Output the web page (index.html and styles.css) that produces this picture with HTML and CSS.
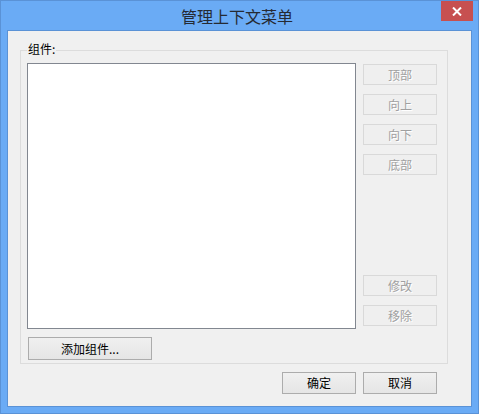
FILE: index.html
```html
<!DOCTYPE html>
<html lang="zh">
<head>
<meta charset="utf-8">
<title>管理上下文菜单</title>
<link rel="stylesheet" href="styles.css">
</head>
<body>
<div class="window">
  <div class="titlebar">
    <span class="spacer"></span>
    <div class="title">管理上下文菜单</div>
    <button class="close" aria-label="关闭">
      <svg width="10" height="9" viewBox="0 0 10 9"><path d="M1 0.5 L9 8.5 M9 0.5 L1 8.5" stroke="#fff" stroke-width="2" fill="none"/></svg>
    </button>
  </div>
  <div class="client">
    <div class="group">
      <span class="legend">组件:</span>
      <div class="group-main">
        <div class="listbox"></div>
        <div class="side">
          <div class="stack">
            <button class="btn disabled">顶部</button>
            <button class="btn disabled">向上</button>
            <button class="btn disabled">向下</button>
            <button class="btn disabled">底部</button>
          </div>
          <div class="stack">
            <button class="btn disabled">修改</button>
            <button class="btn disabled">移除</button>
          </div>
        </div>
      </div>
      <button class="btn add">添加组件...</button>
    </div>
    <div class="footer">
      <button class="btn ok">确定</button>
      <button class="btn ok">取消</button>
    </div>
  </div>
</div>
</body>
</html>
```

FILE: styles.css
```css
* { box-sizing: border-box; }
html, body { margin: 0; padding: 0; }
body {
  width: 479px;
  height: 414px;
  font-family: "Noto Sans CJK SC", "Noto Sans", sans-serif;
  font-size: 12px;
  color: #000;
  background: #6aabf5;
}
.window {
  width: 479px;
  height: 414px;
  border: 1px solid #5a92d6;
  background: #6aabf5;
  display: flex;
  flex-direction: column;
  padding: 0 6px 6px 6px;
}
.titlebar {
  height: 29px;
  margin: 0 -6px;
  padding-right: 5px;
  display: grid;
  grid-template-columns: 1fr auto 1fr;
  align-items: center;
}
.title {
  font-size: 16px;
  line-height: 20px;
  color: #252a33;
  letter-spacing: 0;
  margin-top: 1px;
}
.close {
  justify-self: end;
  align-self: start;
  width: 32px;
  height: 20px;
  border: 0;
  padding: 0;
  margin: 0;
  background: #c75050;
  display: flex;
  align-items: center;
  justify-content: center;
}
.close svg { display: block; }
.client {
  flex: 1;
  border: 1px solid #5a92d6;
  background: #f0f0f0;
  padding: 19px 0 0 12px;
  display: flex;
  flex-direction: column;
}
.group {
  position: relative;
  width: 428px;
  height: 314px;
  border: 1px solid #dcdcdc;
  padding: 12px 10px 3px 6px;
  display: flex;
  flex-direction: column;
}
.legend {
  position: absolute;
  left: 6px;
  top: -9px;
  padding: 0 1px;
  line-height: 14px;
  background: #f0f0f0;
}
.group-main {
  display: grid;
  grid-template-columns: 329px 74px;
  column-gap: 7px;
  height: 266px;
}
.listbox {
  background: #fff;
  border: 1px solid #828790;
}
.side {
  display: flex;
  flex-direction: column;
  justify-content: space-between;
  padding: 1px 0 3px 0;
}
.stack {
  display: flex;
  flex-direction: column;
  gap: 9px;
}
.btn {
  font-family: "Noto Sans CJK SC", "Noto Sans", sans-serif;
  font-size: 12px;
  line-height: 14px;
  padding: 0;
  margin: 0;
  color: #000;
  border: 1px solid #acacac;
  background: linear-gradient(#f0f0f0, #e5e5e5);
  display: flex;
  align-items: center;
  justify-content: center;
}
.btn.disabled {
  height: 21px;
  width: 74px;
  border-color: #d9d9d9;
  background: #efefef;
  color: #a0a0a0;
  text-shadow: 1px 1px 0 #fff;
}
.add {
  margin-top: 8px;
  margin-left: 1px;
  width: 124px;
  height: 23px;
}
.footer {
  margin-top: 8px;
  margin-right: 34px;
  display: flex;
  justify-content: flex-end;
  gap: 7px;
}
.ok {
  width: 74px;
  height: 22px;
}
```
